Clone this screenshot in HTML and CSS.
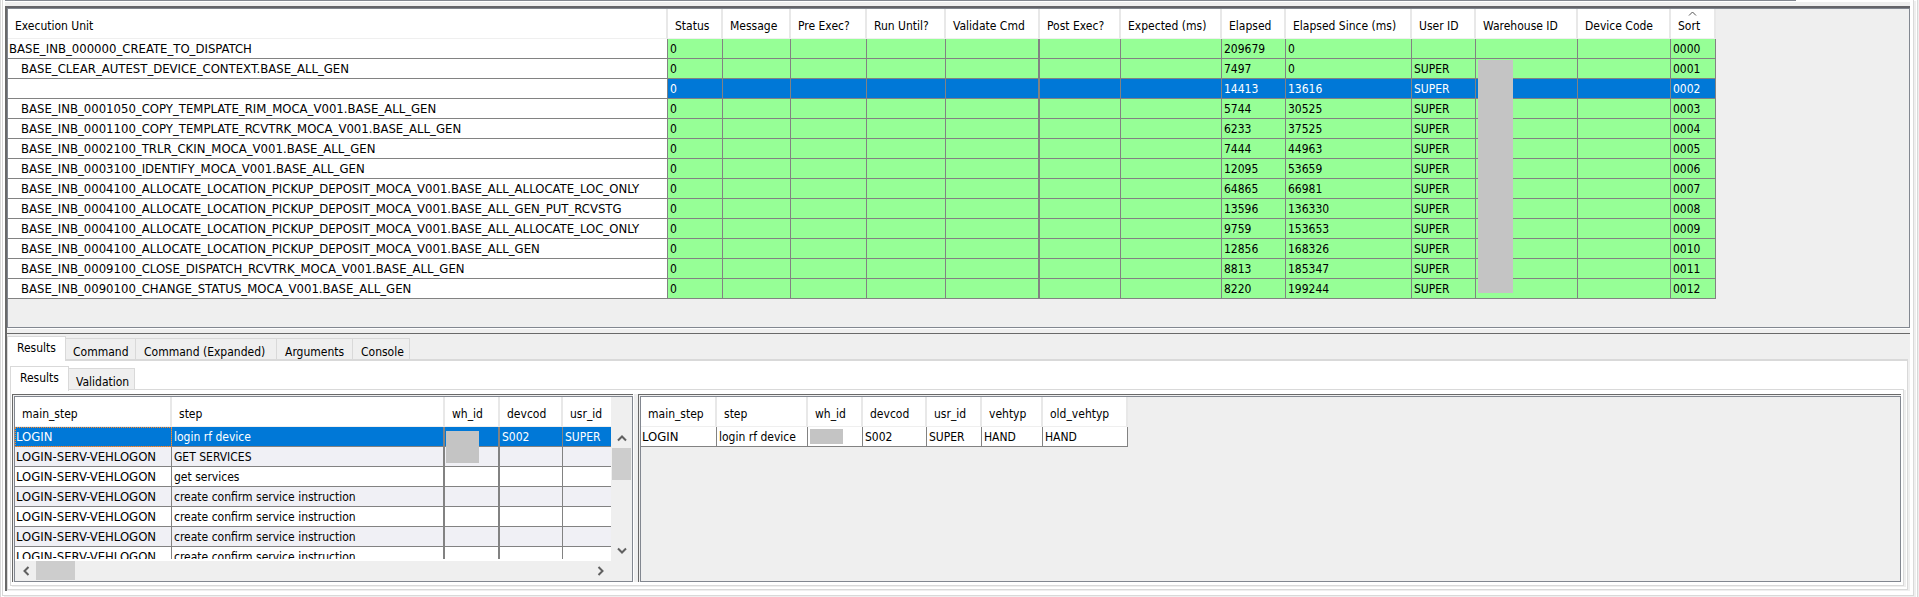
FILE: index.html
```html
<!DOCTYPE html>
<html lang="en">
<head>
<meta charset="utf-8">
<title>Execution Results</title>
<link rel="stylesheet" href="styles.css">
</head>
<body>
<div class="outer">
<div class="frame">
  <div class="strip"><div class="strip-line"></div></div>
  <main class="split">
    <section class="top-pane">
      <div class="grid-wrap">
        <table class="grid runs">
          <colgroup><col class="w-unit"><col class="w-status"><col class="w-message"><col class="w-pre"><col class="w-until"><col class="w-validate"><col class="w-post"><col class="w-expected"><col class="w-elapsed"><col class="w-since"><col class="w-user"><col class="w-warehouse"><col class="w-device"><col class="w-sort"></colgroup>
          <thead><tr><th>Execution Unit</th><th>Status</th><th>Message</th><th>Pre Exec?</th><th>Run Until?</th><th>Validate Cmd</th><th>Post Exec?</th><th>Expected (ms)</th><th>Elapsed</th><th>Elapsed Since (ms)</th><th>User ID</th><th>Warehouse ID</th><th>Device Code</th><th class="sorted"><svg class="sort-mark" width="9" height="5" viewBox="0 0 9 5"><path d="M1 4.5 4.500 1 8 4.500" fill="none" stroke="#555"/></svg>Sort</th></tr></thead>
          <tbody>
            <tr class="root"><td>BASE_INB_000000_CREATE_TO_DISPATCH</td><td>0</td><td></td><td></td><td></td><td></td><td></td><td></td><td>209679</td><td>0</td><td></td><td></td><td></td><td>0000</td></tr>
            <tr><td>BASE_CLEAR_AUTEST_DEVICE_CONTEXT.BASE_ALL_GEN</td><td>0</td><td></td><td></td><td></td><td></td><td></td><td></td><td>7497</td><td>0</td><td>SUPER</td><td></td><td></td><td>0001</td></tr>
            <tr class="selected"><td></td><td>0</td><td></td><td></td><td></td><td></td><td></td><td></td><td>14413</td><td>13616</td><td>SUPER</td><td></td><td></td><td>0002</td></tr>
            <tr><td>BASE_INB_0001050_COPY_TEMPLATE_RIM_MOCA_V001.BASE_ALL_GEN</td><td>0</td><td></td><td></td><td></td><td></td><td></td><td></td><td>5744</td><td>30525</td><td>SUPER</td><td></td><td></td><td>0003</td></tr>
            <tr><td>BASE_INB_0001100_COPY_TEMPLATE_RCVTRK_MOCA_V001.BASE_ALL_GEN</td><td>0</td><td></td><td></td><td></td><td></td><td></td><td></td><td>6233</td><td>37525</td><td>SUPER</td><td></td><td></td><td>0004</td></tr>
            <tr><td>BASE_INB_0002100_TRLR_CKIN_MOCA_V001.BASE_ALL_GEN</td><td>0</td><td></td><td></td><td></td><td></td><td></td><td></td><td>7444</td><td>44963</td><td>SUPER</td><td></td><td></td><td>0005</td></tr>
            <tr><td>BASE_INB_0003100_IDENTIFY_MOCA_V001.BASE_ALL_GEN</td><td>0</td><td></td><td></td><td></td><td></td><td></td><td></td><td>12095</td><td>53659</td><td>SUPER</td><td></td><td></td><td>0006</td></tr>
            <tr><td>BASE_INB_0004100_ALLOCATE_LOCATION_PICKUP_DEPOSIT_MOCA_V001.BASE_ALL_ALLOCATE_LOC_ONLY</td><td>0</td><td></td><td></td><td></td><td></td><td></td><td></td><td>64865</td><td>66981</td><td>SUPER</td><td></td><td></td><td>0007</td></tr>
            <tr><td>BASE_INB_0004100_ALLOCATE_LOCATION_PICKUP_DEPOSIT_MOCA_V001.BASE_ALL_GEN_PUT_RCVSTG</td><td>0</td><td></td><td></td><td></td><td></td><td></td><td></td><td>13596</td><td>136330</td><td>SUPER</td><td></td><td></td><td>0008</td></tr>
            <tr><td>BASE_INB_0004100_ALLOCATE_LOCATION_PICKUP_DEPOSIT_MOCA_V001.BASE_ALL_ALLOCATE_LOC_ONLY</td><td>0</td><td></td><td></td><td></td><td></td><td></td><td></td><td>9759</td><td>153653</td><td>SUPER</td><td></td><td></td><td>0009</td></tr>
            <tr><td>BASE_INB_0004100_ALLOCATE_LOCATION_PICKUP_DEPOSIT_MOCA_V001.BASE_ALL_GEN</td><td>0</td><td></td><td></td><td></td><td></td><td></td><td></td><td>12856</td><td>168326</td><td>SUPER</td><td></td><td></td><td>0010</td></tr>
            <tr><td>BASE_INB_0009100_CLOSE_DISPATCH_RCVTRK_MOCA_V001.BASE_ALL_GEN</td><td>0</td><td></td><td></td><td></td><td></td><td></td><td></td><td>8813</td><td>185347</td><td>SUPER</td><td></td><td></td><td>0011</td></tr>
            <tr><td>BASE_INB_0090100_CHANGE_STATUS_MOCA_V001.BASE_ALL_GEN</td><td>0</td><td></td><td></td><td></td><td></td><td></td><td></td><td>8220</td><td>199244</td><td>SUPER</td><td></td><td></td><td>0012</td></tr>
          </tbody>
        </table>
        <div class="mask mask-runs"></div>
      </div>
    </section>
    <div class="divider"></div>
    <section class="bottom-pane">
      <div class="tabs" role="tablist">
        <button type="button" role="tab" aria-selected="true" class="tab active">Results</button><button type="button" role="tab" class="tab t-command">Command</button><button type="button" role="tab" class="tab t-expanded">Command (Expanded)</button><button type="button" role="tab" class="tab t-arguments">Arguments</button><button type="button" role="tab" class="tab t-console">Console</button>
      </div>
      <div class="page">
        <div class="tabs inner" role="tablist">
          <button type="button" role="tab" aria-selected="true" class="tab active">Results</button><button type="button" role="tab" class="tab t-validation">Validation</button>
        </div>
        <div class="inner-page">
          <div class="box steps-box"><div class="box-in">
            <div class="steps-row">
              <div class="view">
                <table class="grid steps">
                  <colgroup><col class="s-main"><col class="s-step"><col class="s-wh"><col class="s-dev"><col class="s-usr"></colgroup>
                  <thead><tr><th>main_step</th><th>step</th><th>wh_id</th><th>devcod</th><th>usr_id</th></tr></thead>
                  <tbody>
                    <tr class="selected"><td class="focus">LOGIN</td><td>login rf device</td><td></td><td>S002</td><td>SUPER</td></tr>
                    <tr><td>LOGIN-SERV-VEHLOGON</td><td>GET SERVICES</td><td></td><td></td><td></td></tr>
                    <tr><td>LOGIN-SERV-VEHLOGON</td><td>get services</td><td></td><td></td><td></td></tr>
                    <tr><td>LOGIN-SERV-VEHLOGON</td><td>create confirm service instruction</td><td></td><td></td><td></td></tr>
                    <tr><td>LOGIN-SERV-VEHLOGON</td><td>create confirm service instruction</td><td></td><td></td><td></td></tr>
                    <tr><td>LOGIN-SERV-VEHLOGON</td><td>create confirm service instruction</td><td></td><td></td><td></td></tr>
                    <tr><td>LOGIN-SERV-VEHLOGON</td><td>create confirm service instruction</td><td></td><td></td><td></td></tr>
                  </tbody>
                </table>
                <div class="mask mask-steps"></div>
              </div>
              <div class="vbar">
                <button type="button" class="arrow" aria-label="Scroll up"><svg width="10" height="8" viewBox="0 0 10 8"><path d="M1 6.500 5 2.500 9 6.500" fill="none" stroke="#606060" stroke-width="2"/></svg></button>
                <div class="vthumb"></div>
                <button type="button" class="arrow down" aria-label="Scroll down"><svg width="10" height="8" viewBox="0 0 10 8"><path d="M1 1.500 5 5.500 9 1.500" fill="none" stroke="#606060" stroke-width="2"/></svg></button>
              </div>
            </div>
            <div class="hbar">
              <button type="button" class="arrow" aria-label="Scroll left"><svg width="8" height="10" viewBox="0 0 8 10"><path d="M6.500 1 2.500 5 6.500 9" fill="none" stroke="#606060" stroke-width="2"/></svg></button>
              <div class="hthumb"></div>
              <button type="button" class="arrow right" aria-label="Scroll right"><svg width="8" height="10" viewBox="0 0 8 10"><path d="M1.500 1 5.500 5 1.500 9" fill="none" stroke="#606060" stroke-width="2"/></svg></button>
            </div>
          </div></div>
          <div class="v-divider"></div>
          <div class="box detail-box"><div class="box-in">
            <div class="grid-wrap">
              <table class="grid detail">
                <colgroup><col class="d-main"><col class="d-step"><col class="s-wh"><col class="d-dev"><col class="d-usr"><col class="d-veh"><col class="d-old"></colgroup>
                <thead><tr><th>main_step</th><th>step</th><th>wh_id</th><th>devcod</th><th>usr_id</th><th>vehtyp</th><th>old_vehtyp</th></tr></thead>
                <tbody><tr><td>LOGIN</td><td>login rf device</td><td></td><td>S002</td><td>SUPER</td><td>HAND</td><td>HAND</td></tr></tbody>
              </table>
              <div class="mask mask-detail"></div>
            </div>
          </div></div>
        </div>
      </div>
    </section>
  </main>
</div>
</div>
</body>
</html>
```
FILE: styles.css
```css
* { box-sizing: border-box; }
body {
  margin: 0;
  height: 100vh;
  background: #fff;
  color: #000;
  font: 12px/18px "DejaVu Sans Condensed", Tahoma, "Noto Sans", sans-serif;
}
button { font: inherit; color: inherit; border: 0; padding: 0; background: none; }

/* window frame */
.outer {
  height: 100%;
  margin-right: 1px;
  padding: 0 3px 1px 1px;
  border-left: 1px solid #d9d9d9;
  border-right: 1px solid #d9d9d9;
  box-shadow: 1px 0 #efefef;
}
.frame {
  display: flex;
  flex-direction: column;
  height: 100%;
  padding: 0 3px 4px 2px;
  border: 1px solid #d9d9d9;
  border-top: 0;
  box-shadow: 2px 1px #efefef;
}
.strip { height: 6px; background: linear-gradient(#fff 2px, #efefef 2px); }
.strip-line { width: 94%; height: 1px; background: #828790; }
.split {
  flex: 1;
  min-height: 0;
  display: flex;
  flex-direction: column;
  border-left: 2px solid #696969;
  border-top: 2px solid #646469;
}

/* execution list */
.top-pane { border: 1px solid #828790; background: #efefef; padding-bottom: 28px; }
.divider { flex: none; height: 6px; border-top: 1px solid #fff; border-bottom: 1px solid #696969; background: #efefef; }
.grid-wrap { position: relative; }
.grid { table-layout: fixed; width: 0; border-spacing: 0; border-collapse: separate; }
.grid th {
  height: 30px;
  padding: 5px 0 0 7px;
  background: #fff;
  border-right: 2px solid #e8e8e8;
  border-bottom: 1px solid #efefef;
  font-weight: 400;
  text-align: left;
  white-space: nowrap;
}
.grid td {
  height: 20px;
  padding: 1px 0 0 2px;
  background: #fff;
  border-right: 1px solid #828282;
  border-bottom: 1px solid #828282;
  line-height: 18px;
  white-space: nowrap;
}
.grid td:first-child { padding-left: 1px; font-size: 13px; }
.runs td { background: #96ff96; }
.runs td:first-child { background: #fff; padding-left: 13px; }
.runs .root td:first-child { padding-left: 1px; }
.runs td:nth-child(6) { border-right-width: 2px; }
.grid .selected td { background: #0078d7; color: #fff; }
.runs .selected td:first-child { background: #fff; }
.grid .sorted { position: relative; }
.sort-mark { position: absolute; top: 2px; left: 17px; }

.w-unit { width: 660px; }
.w-status { width: 55px; }
.w-message { width: 68px; }
.w-pre { width: 76px; }
.w-until { width: 79px; }
.w-validate { width: 94px; }
.w-post { width: 81px; }
.w-expected { width: 101px; }
.w-elapsed { width: 64px; }
.w-since { width: 126px; }
.w-user { width: 64px; }
.w-warehouse { width: 102px; }
.w-device { width: 93px; }
.w-sort { width: 45px; }

.mask { position: absolute; background: #c4c4c4; }
.mask-runs { left: 1470px; top: 51px; width: 35px; height: 233px; }
.mask-steps { left: 431px; top: 34px; width: 33px; height: 32px; }
.mask-detail { left: 169px; top: 32px; width: 33px; height: 15px; }

/* tabs */
.bottom-pane {
  flex: 1;
  min-height: 0;
  display: flex;
  flex-direction: column;
  padding: 2px 2px 1px 0;
  background: #efefef;
}
.tabs { display: flex; align-items: flex-end; height: 23px; }
.tab {
  height: 21px;
  padding: 4px 0 0 7px;
  border: 1px solid #d9d9d9;
  border-left: 0;
  border-bottom: 0;
  background: #efefef;
  text-align: left;
  white-space: nowrap;
}
.tab.active {
  position: relative;
  width: 59px;
  height: 25px;
  margin-bottom: -2px;
  padding: 0 0 3px 9px;
  border-left: 1px solid #d9d9d9;
  background: #fff;
}
.t-command { width: 70px; }
.t-expanded { width: 141px; }
.t-arguments { width: 76px; }
.t-console { width: 57px; }
.t-validation { width: 66px; }
.t-expanded, .t-arguments, .t-console { padding-left: 8px; }
.page {
  flex: 1;
  min-height: 0;
  display: flex;
  flex-direction: column;
  padding: 5px 3px 3px 2px;
  background: #fff;
  border: 1px solid #d9d9d9;
  border-top-width: 2px;
}
.inner-page {
  flex: 1;
  min-height: 0;
  display: flex;
  padding: 4px 2px 3px 1px;
  border: 1px solid #d9d9d9;
  box-shadow: 2px 1px #efefef;
}

/* result grids */
.box { display: flex; padding: 1px 0 0 1px; border-top: 1px solid #696969; border-left: 1px solid #696969; background: #efefef; }
.box-in { flex: 1; min-width: 0; display: flex; flex-direction: column; border: 1px solid #828790; }
.steps-box { flex: 0 0 621px; }
.v-divider { width: 5px; border-left: 1px solid #fff; background: #efefef; }
.detail-box { flex: 1; }
.steps-row { flex: 1; min-height: 0; display: flex; }
.view { flex: 1; min-width: 0; position: relative; overflow: hidden; border-bottom: 2px solid #fff; }
.steps tbody tr:nth-child(even) td { background: #f0f0f5; }
.steps td:nth-child(2), .steps td:nth-child(3) { border-right-width: 2px; }
.steps th:last-child, .steps td:last-child { border-right: 0; }
.grid td.focus { outline: 1px dotted #ff8728; outline-offset: -1px; }
.s-main { width: 157px; }
.s-step { width: 273px; }
.s-wh { width: 55px; }
.s-dev { width: 63px; }
.s-usr { width: 48px; }
.d-main { width: 76px; }
.d-step { width: 91px; }
.d-dev { width: 64px; }
.d-usr { width: 55px; }
.d-veh { width: 61px; }
.d-old { width: 85px; }

.vbar { width: 21px; padding: 30px 1px 0; display: flex; flex-direction: column; }
.hbar { height: 20px; padding-right: 21px; display: flex; }
.arrow { display: flex; align-items: center; justify-content: center; width: 21px; height: 19px; }
.vbar .arrow { width: 19px; height: 21px; }
.vthumb { height: 32px; background: #cdcdcd; }
.hthumb { width: 39px; height: 19px; background: #cdcdcd; }
.vbar .down { margin-top: auto; }
.right { margin-left: auto; }
```
